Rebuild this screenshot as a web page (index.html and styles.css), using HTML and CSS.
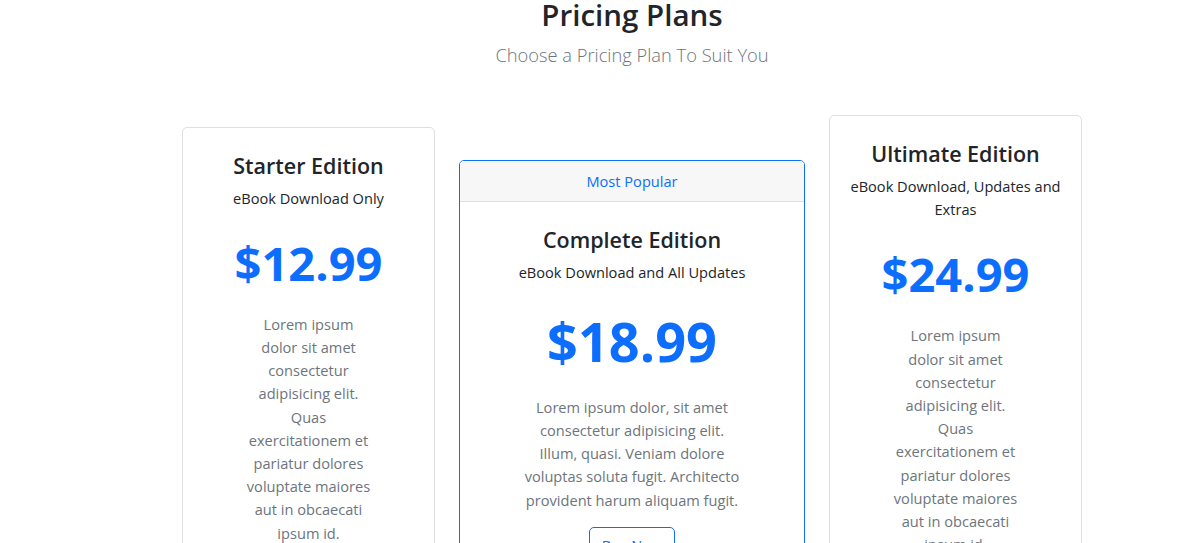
FILE: index.html
```html
<!DOCTYPE html>
<html lang="en">
<head>
<meta charset="utf-8">
<title>Pricing Plans</title>
<link rel="stylesheet" href="styles.css">
</head>
<body>
<main class="page">
  <header class="intro">
    <h2 class="intro-title">Pricing Plans</h2>
    <p class="intro-lead">Choose a Pricing Plan To Suit You</p>
  </header>
  <section class="plans">
    <article class="card card-side">
      <div class="card-body">
        <h3 class="plan-title">Starter Edition</h3>
        <p class="plan-sub">eBook Download Only</p>
        <p class="price">$12.99</p>
        <p class="plan-text">Lorem ipsum dolor sit amet consectetur adipisicing elit. Quas exercitationem et pariatur dolores voluptate maiores aut in obcaecati ipsum id.</p>
        <a class="btn" href="#">Buy Now</a>
      </div>
    </article>
    <article class="card card-main">
      <div class="card-header">Most Popular</div>
      <div class="card-body">
        <h3 class="plan-title">Complete Edition</h3>
        <p class="plan-sub">eBook Download and All Updates</p>
        <p class="price price-lg">$18.99</p>
        <p class="plan-text">Lorem ipsum dolor, sit amet consectetur adipisicing elit. Illum, quasi. Veniam dolore voluptas soluta fugit. Architecto provident harum aliquam fugit.</p>
        <a class="btn" href="#">Buy Now</a>
      </div>
    </article>
    <article class="card card-side">
      <div class="card-body">
        <h3 class="plan-title">Ultimate Edition</h3>
        <p class="plan-sub">eBook Download, Updates and Extras</p>
        <p class="price">$24.99</p>
        <p class="plan-text">Lorem ipsum dolor sit amet consectetur adipisicing elit. Quas exercitationem et pariatur dolores voluptate maiores aut in obcaecati ipsum id.</p>
        <a class="btn" href="#">Buy Now</a>
      </div>
    </article>
  </section>
</main>
</body>
</html>
```
FILE: styles.css
```css
*, *::before, *::after {
  box-sizing: border-box;
}
html, body {
  margin: 0;
  padding: 0;
  background: #ffffff;
}
body {
  font-family: "Open Sans", "Noto Sans", "Liberation Sans", sans-serif;
  font-size: 14.6px;
  line-height: 23.2px;
  color: #212529;
}
.page {
  width: 900px;
  margin: 0 0 0 182px;
}
.intro {
  text-align: center;
  margin-top: -3px;
}
.intro-title {
  margin: 0;
  font-size: 29.5px;
  line-height: 36px;
  font-weight: 600;
  color: #212529;
}
.intro-lead {
  margin: 8px 0 0;
  font-size: 18.3px;
  line-height: 28px;
  font-weight: 300;
  color: #6c757d;
}
.plans {
  display: flex;
  align-items: center;
  gap: 24px;
  margin-top: 46px;
}
.card {
  background: #fff;
  border: 1px solid #dfdfdf;
  border-radius: 5px;
  text-align: center;
  overflow: hidden;
}
.card-side {
  width: 253px;
  flex: none;
}
.card-main {
  width: 346px;
  flex: none;
  border-color: #0d6efd;
}
.card-header {
  background: #f7f7f7;
  border-bottom: 1px solid #dfdfdf;
  color: #0d6efd;
  padding: 8px 15px;
  line-height: 24px;
}
.card-body {
  padding: 24px 15.5px 23px;
}
.plan-title {
  margin: 0 0 7px;
  font-size: 21.5px;
  line-height: 28px;
  font-weight: 600;
  color: #212529;
}
.plan-sub {
  margin: 0 0 25px;
  color: #212529;
}
.price {
  margin: 0 0 22px;
  font-size: 47px;
  line-height: 56px;
  font-weight: 700;
  color: #0d6efd;
}
.price-lg {
  font-size: 54px;
  line-height: 65px;
}
.plan-text {
  margin: 0 0 15.5px;
  padding: 0 47px;
  color: #6c757d;
}
.btn {
  display: inline-block;
  padding: 6px 12px;
  border: 1px solid #0d6efd;
  border-radius: 5px;
  color: #0d6efd;
  text-decoration: none;
  line-height: 23px;
}
```
